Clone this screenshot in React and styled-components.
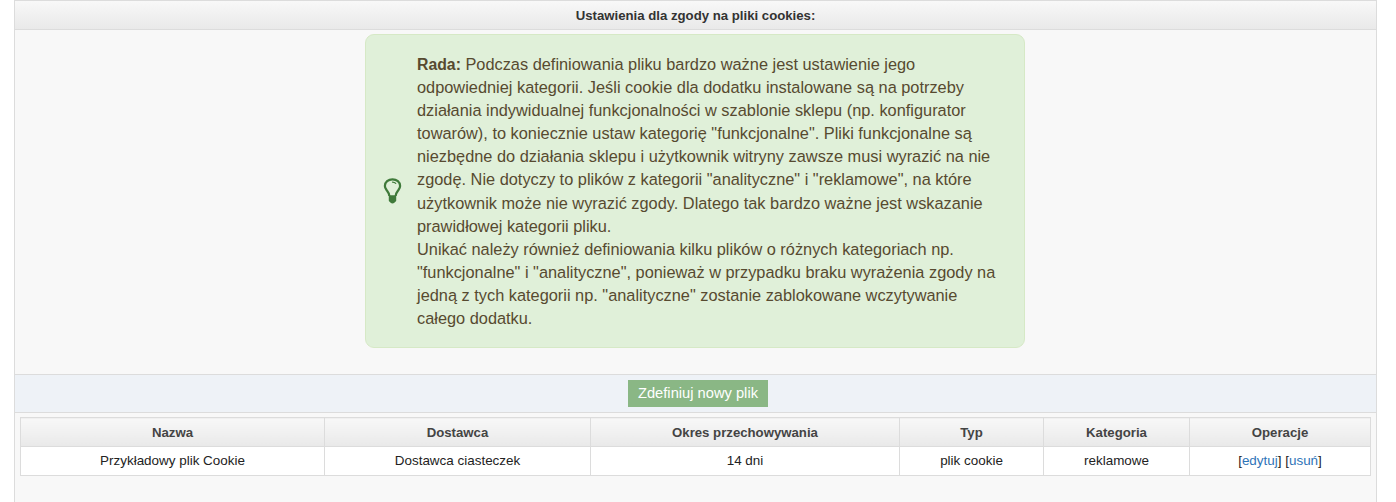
import React from "react";
import styled, { createGlobalStyle } from "styled-components";

const Global = createGlobalStyle`
  html, body { margin: 0; padding: 0; background: #fff; height: 100%; overflow: hidden; }
  body { font-family: "Liberation Sans", Arial, sans-serif; }
`;
const Page = styled.div`
  box-sizing: border-box;
  margin: 0 19px 0 14px;
  height: 502px;
  border: 1px solid #dcdcdc;
  border-bottom: 0;
  background: #f8f8f8;
`;
const Header = styled.h2`
  margin: 0;
  box-sizing: border-box;
  height: 29px;
  line-height: 29px;
  border-bottom: 1px solid #dcdcdc;
  background: linear-gradient(to bottom, #f8f8f8, #e9e9e9);
  text-align: center;
  font-size: 13.2px;
  font-weight: bold;
  color: #333;
`;
const TipRow = styled.div`
  display: flex;
  justify-content: center;
  padding: 4px 1px 26px 0;
`;
const Tip = styled.div`
  box-sizing: border-box;
  width: 660px;
  height: 314px;
  display: flex;
  align-items: center;
  gap: 15px;
  padding: 0 10px 0 17px;
  background: #e0f0d9;
  border: 1px solid #d6e9c6;
  border-radius: 9px;
  color: #574a30;
  font-size: 16.35px;
  line-height: 23.1px;
`;
const TipText = styled.p`
  margin: 0;
  padding-top: 1px;
  flex: 1;
  white-space: nowrap;
`;
const TipLabel = styled.b`
  font-size: 15.8px;
`;
const Band = styled.div`
  box-sizing: border-box;
  height: 39px;
  display: flex;
  justify-content: center;
  align-items: center;
  padding-left: 5px;
  background: #eef2f7;
  border-top: 1px solid #dcdcdc;
  border-bottom: 1px solid #dcdcdc;
`;
const AddButton = styled.button`
  width: 140px;
  height: 27px;
  border: 0;
  padding: 0;
  background: #8ab785;
  color: #fff;
  font: 14.7px/27px "Liberation Sans", Arial, sans-serif;
`;
const TableWrap = styled.div`
  padding: 4px 5px 0 5px;
`;
const Table = styled.table`
  width: 1350px;
  table-layout: fixed;
  border-collapse: collapse;
  font-size: 13.45px;
`;
const Col = styled.col`
  width: ${(p) => p.$w}px;
`;
const Th = styled.th`
  height: 28px;
  padding: 0;
  border: 1px solid #dcdcdc;
  background: linear-gradient(to bottom, #f8f8f8, #e9e9e9);
  color: #444;
  font-size: 13.2px;
  font-weight: bold;
  text-align: center;
`;
const Td = styled.td`
  height: 27px;
  padding: 0 0 1px;
  border: 1px solid #dcdcdc;
  background: #fff;
  color: #222;
  text-align: center;
`;
const Link = styled.a`
  color: #2f74b8;
  text-decoration: none;
`;

const Bulb = () => (
  <svg width="19" height="26" viewBox="0 0 20 28" fill="none" aria-hidden="true">
    <path d="M6.6 19.500c0-3-1.300-4.400-3-6.600C2.500 11.400 1.800 10 1.800 8.500 1.800 4.200 5.500 1.400 10 1.400s8.200 2.800 8.200 7.100c0 1.500-.7 2.900-1.800 4.400-1.700 2.200-3 3.600-3 6.600" stroke="#3f7a3a" strokeWidth="2.400" />
    <path d="M13.500 5.800c-.8-.8-2-1.300-3.500-1.400" stroke="#3f7a3a" strokeWidth="1.300" strokeLinecap="round" />
    <path d="M6 18.600h8v5.600c0 .8-.6 1.300-1.300 1.400-.3 1-1.400 1.800-2.700 1.800s-2.400-.8-2.700-1.800c-.7-.1-1.300-.6-1.300-1.400z" fill="#3f7a3a" />
  </svg>
);

const columns = [
  ["Nazwa", 304],
  ["Dostawca", 266],
  ["Okres przechowywania", 309],
  ["Typ", 144],
  ["Kategoria", 146],
  ["Operacje", 181],
];

export default function App() {
  return (
    <>
      <Global />
      <Page>
        <Header>Ustawienia dla zgody na pliki cookies:</Header>
        <TipRow>
          <Tip>
            <Bulb />
            <TipText>
              <TipLabel>Rada:</TipLabel> Podczas definiowania pliku bardzo ważne jest ustawienie jego<br />
              odpowiedniej kategorii. Jeśli cookie dla dodatku instalowane są na potrzeby<br />
              działania indywidualnej funkcjonalności w szablonie sklepu (np. konfigurator<br />
              towarów), to koniecznie ustaw kategorię "funkcjonalne". Pliki funkcjonalne są<br />
              niezbędne do działania sklepu i użytkownik witryny zawsze musi wyrazić na nie<br />
              zgodę. Nie dotyczy to plików z kategorii "analityczne" i "reklamowe", na które<br />
              użytkownik może nie wyrazić zgody. Dlatego tak bardzo ważne jest wskazanie<br />
              prawidłowej kategorii pliku.<br />
              Unikać należy również definiowania kilku plików o różnych kategoriach np.<br />
              "funkcjonalne" i "analityczne", ponieważ w przypadku braku wyrażenia zgody na<br />
              jedną z tych kategorii np. "analityczne" zostanie zablokowane wczytywanie<br />
              całego dodatku.
            </TipText>
          </Tip>
        </TipRow>
        <Band>
          <AddButton>Zdefiniuj nowy plik</AddButton>
        </Band>
        <TableWrap>
          <Table>
            <colgroup>
              {columns.map(([name, w]) => (
                <Col key={name} $w={w} />
              ))}
            </colgroup>
            <thead>
              <tr>
                {columns.map(([name]) => (
                  <Th key={name}>{name}</Th>
                ))}
              </tr>
            </thead>
            <tbody>
              <tr>
                <Td>Przykładowy plik Cookie</Td>
                <Td>Dostawca ciasteczek</Td>
                <Td>14 dni</Td>
                <Td>plik cookie</Td>
                <Td>reklamowe</Td>
                <Td>
                  [<Link href="#">edytuj</Link>] [<Link href="#">usuń</Link>]
                </Td>
              </tr>
            </tbody>
          </Table>
        </TableWrap>
      </Page>
    </>
  );
}
